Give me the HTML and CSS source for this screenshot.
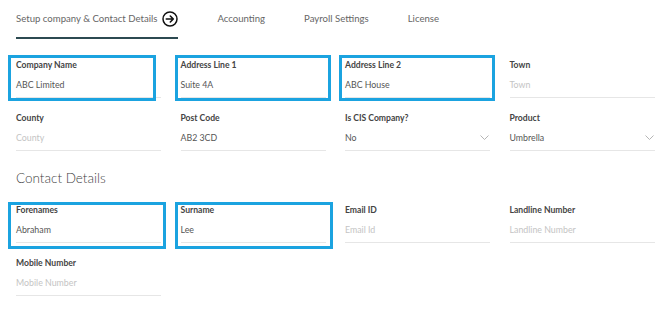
FILE: index.html
```html
<!DOCTYPE html>
<html>
<head>
<meta charset="utf-8">
<link rel="stylesheet" href="styles.css">
</head>
<body>
<nav class="tabs">
  <div class="tab active">Setup company &amp; Contact Details
    <svg class="tab-icon" width="16" height="16" viewBox="0 0 16 16"><circle cx="8" cy="8" r="7" fill="none" stroke="#111" stroke-width="1.5"/><path d="M4.3 8h7M8.3 5l3 3-3 3" fill="none" stroke="#111" stroke-width="1.6" stroke-linecap="round" stroke-linejoin="round"/></svg>
  </div>
  <div class="tab">Accounting</div>
  <div class="tab">Payroll Settings</div>
  <div class="tab">License</div>
</nav>

<main class="form">
  <section class="grid">
    <div class="field"><span class="hl hl-company"></span><div class="label">Company Name</div><div class="value">ABC Limited</div></div>
    <div class="field"><span class="hl"></span><div class="label">Address Line 1</div><div class="value">Suite 4A</div></div>
    <div class="field"><span class="hl"></span><div class="label">Address Line 2</div><div class="value">ABC House</div></div>
    <div class="field"><div class="label">Town</div><div class="value placeholder">Town</div></div>

    <div class="field"><div class="label">County</div><div class="value placeholder">County</div></div>
    <div class="field"><div class="label">Post Code</div><div class="value">AB2 3CD</div></div>
    <div class="field"><div class="label">Is CIS Company?</div><div class="value select">No<svg width="9" height="5" viewBox="0 0 9 5"><path d="M0.5 0.5l4 4 4-4" fill="none" stroke="#b5b5b5" stroke-width="1"/></svg></div></div>
    <div class="field"><div class="label">Product</div><div class="value select">Umbrella<svg width="9" height="5" viewBox="0 0 9 5"><path d="M0.5 0.5l4 4 4-4" fill="none" stroke="#b5b5b5" stroke-width="1"/></svg></div></div>
  </section>

  <h2 class="section-title">Contact Details</h2>

  <section class="grid">
    <div class="field"><span class="hl hl-fore"></span><div class="label">Forenames</div><div class="value">Abraham</div></div>
    <div class="field"><span class="hl hl-sur"></span><div class="label">Surname</div><div class="value">Lee</div></div>
    <div class="field"><div class="label">Email ID</div><div class="value placeholder">Email Id</div></div>
    <div class="field"><div class="label">Landline Number</div><div class="value placeholder">Landline Number</div></div>

    <div class="field"><div class="label">Mobile Number</div><div class="value placeholder">Mobile Number</div></div>
  </section>
</main>
</body>
</html>
```

FILE: styles.css
```css
* { box-sizing: border-box; }

body {
  margin: 0;
  background: #ffffff;
  font-family: "Lato", "Open Sans", sans-serif;
  color: #333;
}

.tabs {
  display: flex;
  gap: 39px;
  padding: 0 16px;
}

.tab {
  display: flex;
  align-items: center;
  gap: 5px;
  padding: 11px 0 10px;
  font-size: 9.6px;
  line-height: 16px;
  color: #666;
  border-bottom: 2px solid transparent;
}

.tab.active {
  border-bottom-color: #2c4a51;
}

.tab-icon { display: block; }

.form {
  padding: 19.5px 16px 0;
}

.grid {
  display: grid;
  grid-template-columns: repeat(4, 145px);
  column-gap: 19.5px;
  row-gap: 14px;
}

.field {
  position: relative;
}

.label {
  font-size: 8.6px;
  font-weight: 700;
  line-height: 12px;
  color: #444;
}

.value {
  margin-top: 4px;
  font-size: 8.8px;
  line-height: 20px;
  padding-bottom: 2px;
  color: #555;
  border-bottom: 1px solid #e6e6e6;
}

.value.placeholder { color: #c4c4c4; }

.value.select {
  display: flex;
  align-items: center;
  justify-content: space-between;
  padding-right: 1px;
}

.hl {
  position: absolute;
  top: -4px;
  bottom: -3px;
  left: -6px;
  right: -5px;
  border: 3px solid #1ba3e0;
  pointer-events: none;
}

.hl-company { left: -8px; right: 5px; }
.hl-fore { left: -8px; right: -5px; top: -2px; bottom: -6px; }
.hl-sur { top: -2px; bottom: -6px; right: -7px; }

.section-title {
  margin: 18px 0 17px;
  font-size: 13.5px;
  line-height: 18px;
  font-weight: 300;
  color: #3f3f3f;
}
```
